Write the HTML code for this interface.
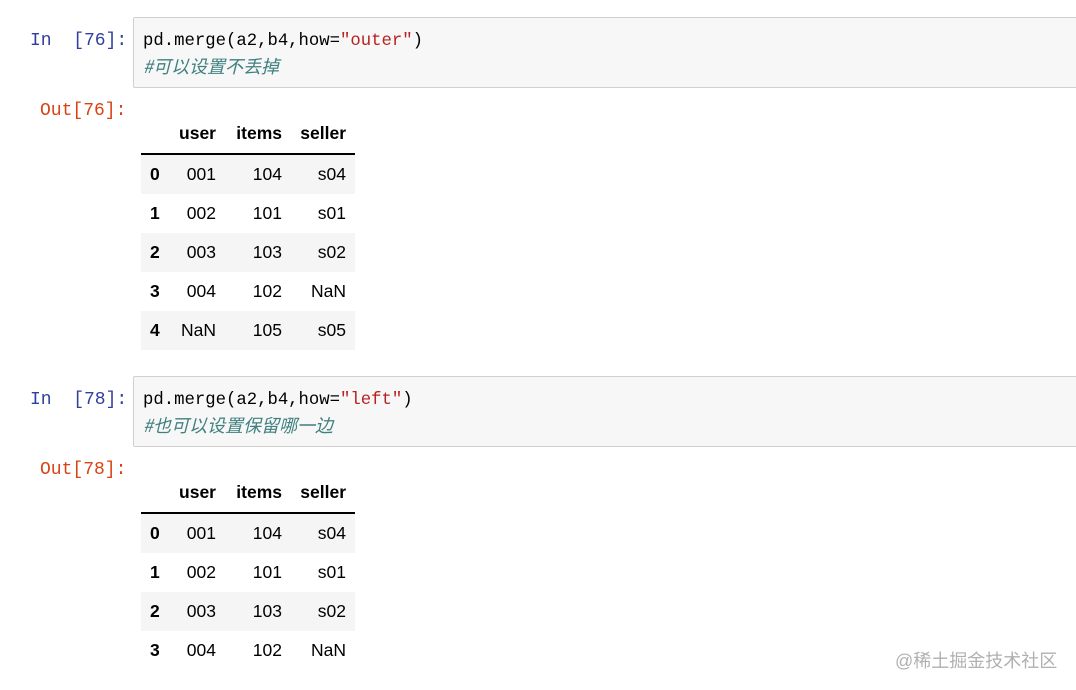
<!DOCTYPE html>
<html><head><meta charset="utf-8"><style>
body{margin:0;width:1076px;height:690px;background:#fff;overflow:hidden;position:relative;font-family:"Liberation Sans",Arial,sans-serif}
.a{position:absolute;white-space:nowrap}
.code{font-family:"Liberation Mono","Noto Serif CJK SC",monospace;font-size:17.3px;line-height:24px}
.box{position:absolute;left:133px;width:960px;height:69px;background:#f7f7f7;border:1px solid #cfcfcf;border-radius:2px}
.in{color:#303f9f;font-family:"Liberation Mono","Noto Serif CJK SC",monospace;font-size:18px}
.out{color:#d84315;font-family:"Liberation Mono","Noto Serif CJK SC",monospace;font-size:18px}
.str{color:#ba2121}
.cm{color:#408080;font-style:italic;font-family:"Noto Sans CJK SC",sans-serif;font-size:18px}
.tbl{position:absolute;left:141px;width:214px;font-size:17.5px;color:#000}
.hd{height:39px;position:relative;font-weight:bold}
.rule{height:2px;background:#000}
.r{height:39px;position:relative}
.r:nth-child(odd){background:#f5f5f5}
.c{position:absolute;top:0;line-height:39px}
.i{left:9px;font-weight:bold}
.u{right:139px}.t{right:73px}.s{right:9px}
</style></head><body>

<div class="a in" style="left:30px;top:31px">In&nbsp;&nbsp;[76]:</div>
<div class="box" style="top:17px"></div>
<div class="a code" style="left:143px;top:30px">pd.merge(a2,b4,how=<span class="str">"outer"</span>)</div>
<div class="a cm" style="left:143px;top:53px;line-height:26px">#可以设置不丢掉</div>
<div class="a out" style="left:40px;top:101px">Out[76]:</div>
<div class="tbl" style="top:114px">
<div class="hd"><span class="c u">user</span><span class="c t">items</span><span class="c s">seller</span></div>
<div class="rule"></div>
<div>
<div class="r"><span class="c i">0</span><span class="c u">001</span><span class="c t">104</span><span class="c s">s04</span></div>
<div class="r"><span class="c i">1</span><span class="c u">002</span><span class="c t">101</span><span class="c s">s01</span></div>
<div class="r"><span class="c i">2</span><span class="c u">003</span><span class="c t">103</span><span class="c s">s02</span></div>
<div class="r"><span class="c i">3</span><span class="c u">004</span><span class="c t">102</span><span class="c s">NaN</span></div>
<div class="r"><span class="c i">4</span><span class="c u">NaN</span><span class="c t">105</span><span class="c s">s05</span></div>
</div></div>

<div class="a in" style="left:30px;top:390px">In&nbsp;&nbsp;[78]:</div>
<div class="box" style="top:376px"></div>
<div class="a code" style="left:143px;top:389px">pd.merge(a2,b4,how=<span class="str">"left"</span>)</div>
<div class="a cm" style="left:143px;top:412px;line-height:26px">#也可以设置保留哪一边</div>
<div class="a out" style="left:40px;top:460px">Out[78]:</div>
<div class="tbl" style="top:473px">
<div class="hd"><span class="c u">user</span><span class="c t">items</span><span class="c s">seller</span></div>
<div class="rule"></div>
<div>
<div class="r"><span class="c i">0</span><span class="c u">001</span><span class="c t">104</span><span class="c s">s04</span></div>
<div class="r"><span class="c i">1</span><span class="c u">002</span><span class="c t">101</span><span class="c s">s01</span></div>
<div class="r"><span class="c i">2</span><span class="c u">003</span><span class="c t">103</span><span class="c s">s02</span></div>
<div class="r"><span class="c i">3</span><span class="c u">004</span><span class="c t">102</span><span class="c s">NaN</span></div>
</div></div>

<div class="a" style="left:895px;top:647px;font-size:18px;color:#b0b0b0;font-family:'Liberation Sans','Noto Sans CJK SC',sans-serif">@稀土掘金技术社区</div>
</body></html>
